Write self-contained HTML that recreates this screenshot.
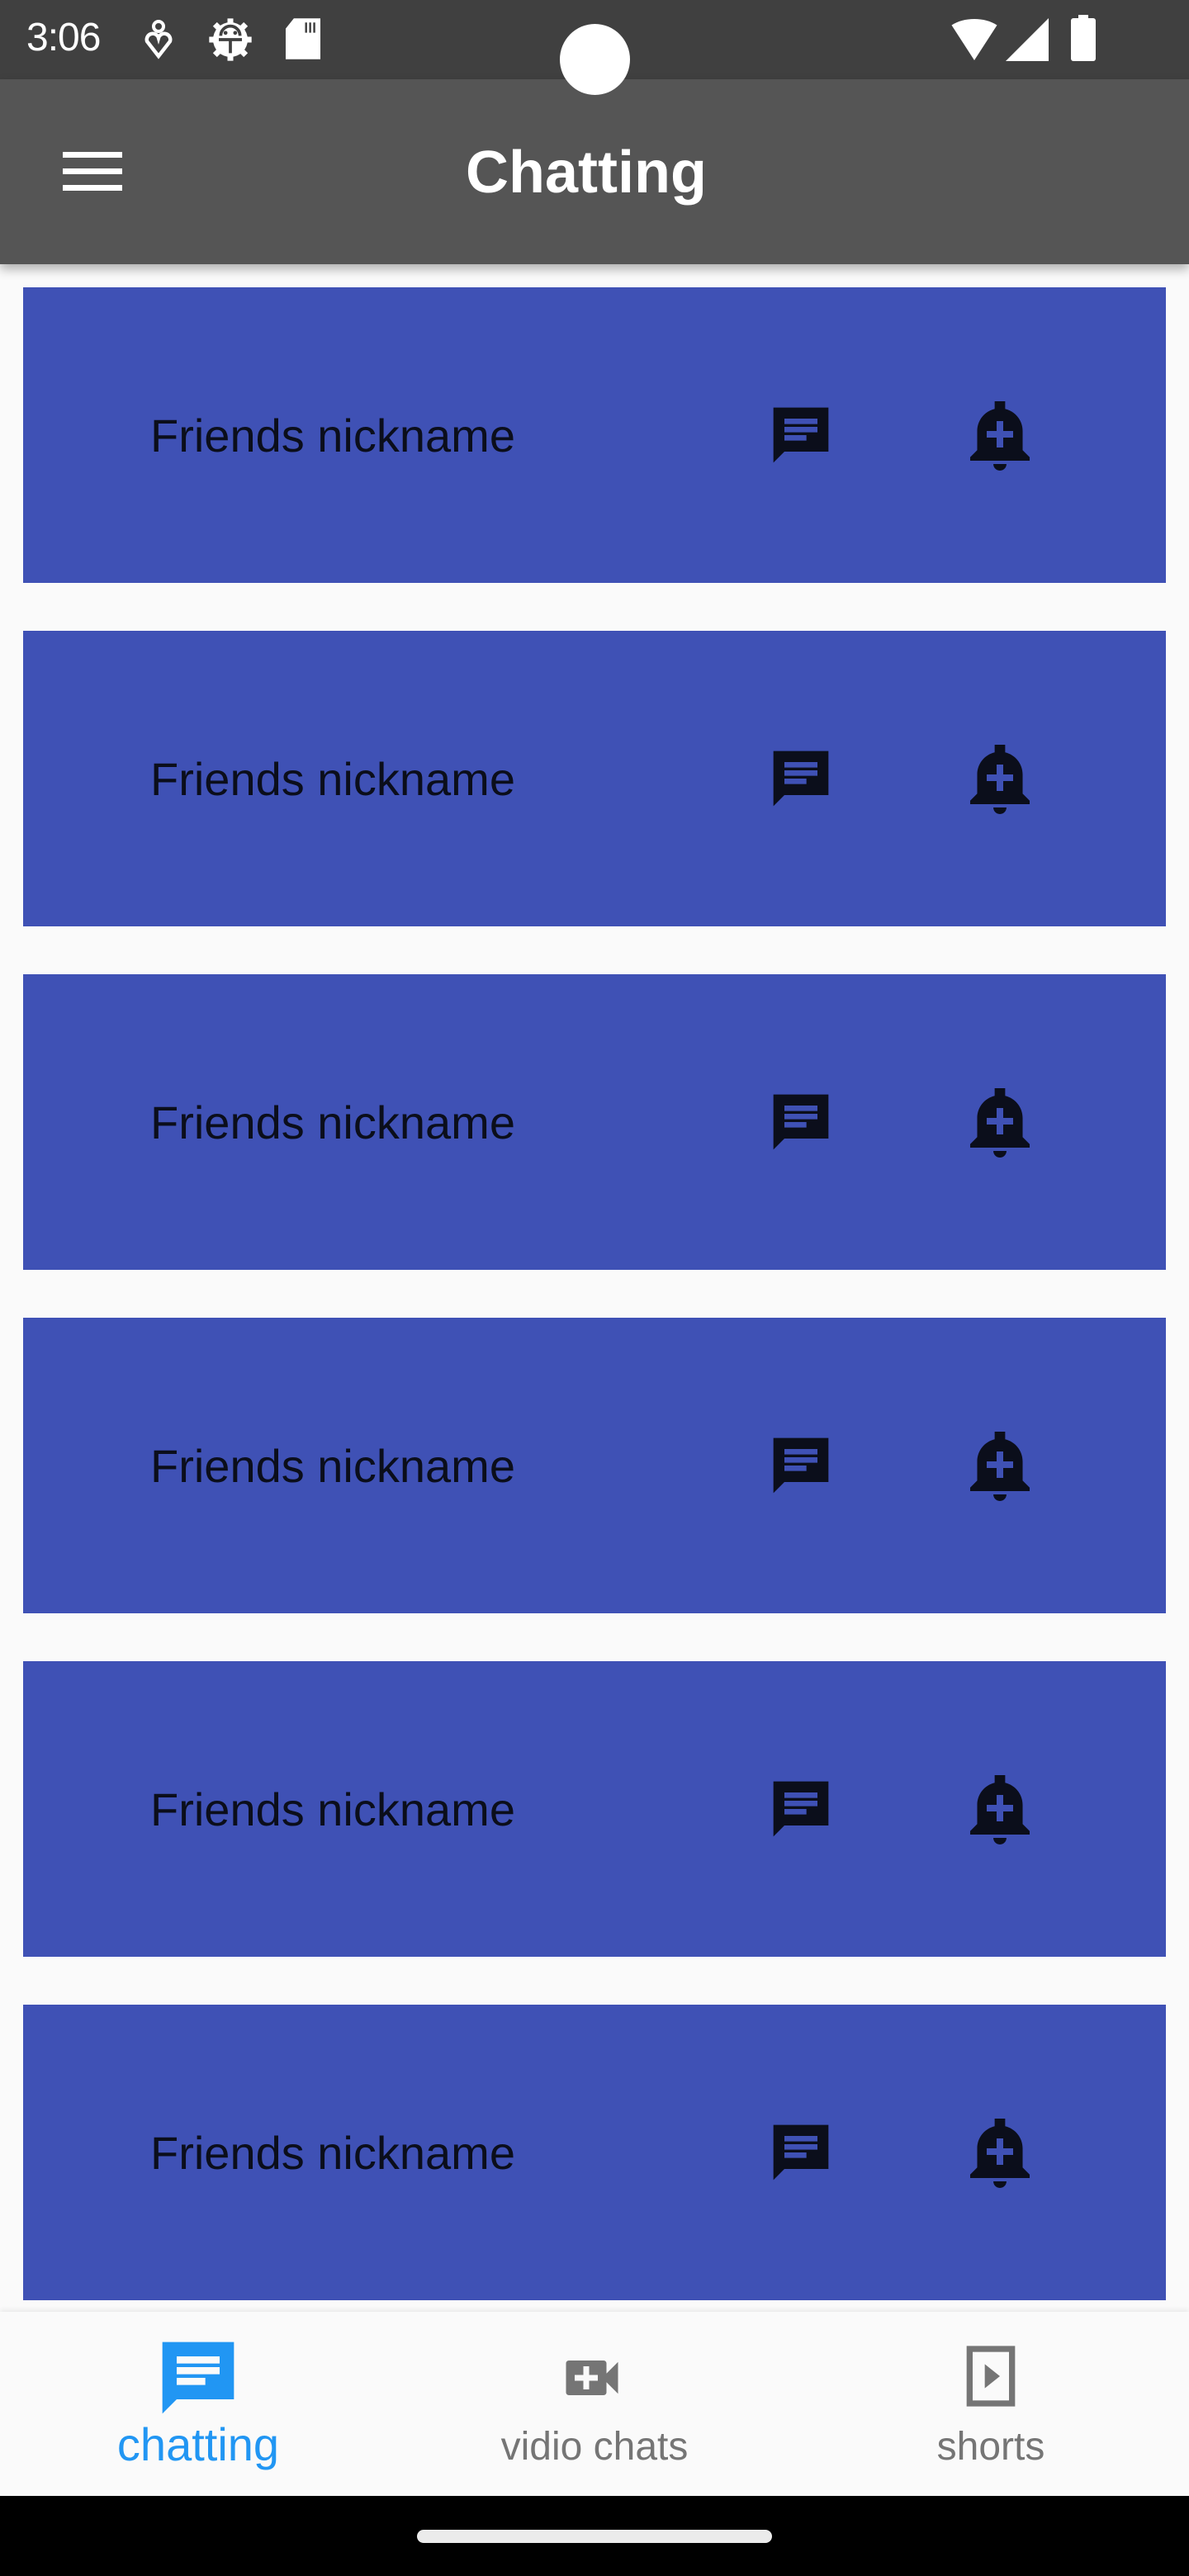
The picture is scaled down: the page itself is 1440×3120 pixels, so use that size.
<!DOCTYPE html>
<html><head><meta charset="utf-8"><style>
*{margin:0;padding:0;box-sizing:border-box}
body{width:1440px;height:3120px;background:#fafafa;position:relative;overflow:hidden;font-family:"Liberation Sans",sans-serif}
.sb{position:absolute;left:0;top:0;width:1440px;height:96px;background:#404040}
.ab{position:absolute;left:0;top:96px;width:1440px;height:224px;background:#555;box-shadow:0 6px 12px rgba(0,0,0,.3);z-index:2}
.card{position:absolute;left:28px;width:1384px;height:358px;background:#3f51b5}
.card .t{position:absolute;left:154px;top:152px;font-size:56px;color:#0b0e1b;line-height:56px}
.card svg{position:absolute;fill:#0b0e1b}
.nav{position:absolute;left:0;top:2800px;width:1440px;height:223px;background:#fafafa;box-shadow:0 -2px 6px rgba(0,0,0,.08);z-index:3}
.lbl{position:absolute;width:480px;text-align:center}
.bot{position:absolute;left:0;top:3023px;width:1440px;height:97px;background:#000;z-index:3}
</style></head><body>
<div class="sb">
<div style="position:absolute;left:32px;top:18px;font-size:48px;color:#fff;letter-spacing:-1px">3:06</div>
<svg style="position:absolute;left:172px;top:24px" width="40" height="48" viewBox="0 0 20 24"><circle cx="10" cy="4" r="3" fill="none" stroke="#fff" stroke-width="2"/><path d="M10 22 L3 13 A3.5 3.5 0 0 1 10 11 A3.5 3.5 0 0 1 17 13 Z" fill="none" stroke="#fff" stroke-width="2.2"/></svg>
<svg style="position:absolute;left:250px;top:20px" width="58" height="56" viewBox="0 0 24 24"><circle cx="12" cy="12" r="9" fill="#fff"/><g stroke="#fff" stroke-width="3"><path d="M12 1v22M1 12h22M4 4l16 16M20 4L4 20"/></g><path d="M6 12h12M12 12v7M7 10a5 5 0 0 1 10 0" stroke="#404040" stroke-width="1.6" fill="none"/><circle cx="9.5" cy="8.5" r="1" fill="#404040"/><circle cx="14.5" cy="8.5" r="1" fill="#404040"/></svg>
<svg style="position:absolute;left:346px;top:22px" width="42" height="50" viewBox="0 0 17 20"><path d="M4 0h13v20H0V5z" fill="#fff"/><path d="M10 2v5M12 2v5M14 2v5" stroke="#404040" stroke-width="1"/></svg>
<svg style="position:absolute;left:1150px;top:22px" width="60" height="52" viewBox="0 0 24 20"><path d="M12 20L1 3C7-1 17-1 23 3z" fill="#fff"/></svg>
<svg style="position:absolute;left:1218px;top:22px" width="52" height="52" viewBox="0 0 20 20"><path d="M20 0v20H0z" fill="#fff"/></svg>
<div style="position:absolute;left:1297px;top:22px;width:30px;height:52px;background:#fff;border-radius:3px"></div>
<div style="position:absolute;left:1306px;top:18px;width:12px;height:6px;background:#fff"></div>
</div>
<div style="position:absolute;left:678px;top:29px;width:85px;height:86px;border-radius:50%;background:#fff;z-index:5"></div>
<div class="ab">
<div style="position:absolute;left:76px;top:88px;width:72px;height:7px;background:#fff"></div>
<div style="position:absolute;left:76px;top:108px;width:72px;height:7px;background:#fff"></div>
<div style="position:absolute;left:76px;top:128px;width:72px;height:7px;background:#fff"></div>
<div style="position:absolute;left:0;width:1420px;text-align:center;top:72px;font-size:72px;color:#fff;font-weight:bold">Chatting</div>
</div>

<div class="card" style="top:348px"><div class="t">Friends nickname</div>
<svg style="left:902px;top:139px" width="80" height="80" viewBox="0 0 24 24"><path d="M2 2h20v16H6l-4 4zM6 14h8v-2H6zM6 11h12V9H6zM6 8h12V6H6z" fill-rule="evenodd"/></svg>
<svg style="left:1135px;top:130px" width="96" height="96" viewBox="0 0 24 24"><path d="M10.01 21.01c0 1.1.89 1.99 1.99 1.99s1.99-.89 1.99-1.99h-3.98zm8.87-4.19V11c0-3.25-2.25-5.97-5.29-6.69V2h-3.18v2.31C7.37 5.03 5.12 7.75 5.12 11v5.82L3 18.94V20h18v-1.06l-2.12-2.12zM16 13.01h-3v3h-2v-3H8V11h3V8h2v3h3v2.01z"/></svg></div>
<div class="card" style="top:764px"><div class="t">Friends nickname</div>
<svg style="left:902px;top:139px" width="80" height="80" viewBox="0 0 24 24"><path d="M2 2h20v16H6l-4 4zM6 14h8v-2H6zM6 11h12V9H6zM6 8h12V6H6z" fill-rule="evenodd"/></svg>
<svg style="left:1135px;top:130px" width="96" height="96" viewBox="0 0 24 24"><path d="M10.01 21.01c0 1.1.89 1.99 1.99 1.99s1.99-.89 1.99-1.99h-3.98zm8.87-4.19V11c0-3.25-2.25-5.97-5.29-6.69V2h-3.18v2.31C7.37 5.03 5.12 7.75 5.12 11v5.82L3 18.94V20h18v-1.06l-2.12-2.12zM16 13.01h-3v3h-2v-3H8V11h3V8h2v3h3v2.01z"/></svg></div>
<div class="card" style="top:1180px"><div class="t">Friends nickname</div>
<svg style="left:902px;top:139px" width="80" height="80" viewBox="0 0 24 24"><path d="M2 2h20v16H6l-4 4zM6 14h8v-2H6zM6 11h12V9H6zM6 8h12V6H6z" fill-rule="evenodd"/></svg>
<svg style="left:1135px;top:130px" width="96" height="96" viewBox="0 0 24 24"><path d="M10.01 21.01c0 1.1.89 1.99 1.99 1.99s1.99-.89 1.99-1.99h-3.98zm8.87-4.19V11c0-3.25-2.25-5.97-5.29-6.69V2h-3.18v2.31C7.37 5.03 5.12 7.75 5.12 11v5.82L3 18.94V20h18v-1.06l-2.12-2.12zM16 13.01h-3v3h-2v-3H8V11h3V8h2v3h3v2.01z"/></svg></div>
<div class="card" style="top:1596px"><div class="t">Friends nickname</div>
<svg style="left:902px;top:139px" width="80" height="80" viewBox="0 0 24 24"><path d="M2 2h20v16H6l-4 4zM6 14h8v-2H6zM6 11h12V9H6zM6 8h12V6H6z" fill-rule="evenodd"/></svg>
<svg style="left:1135px;top:130px" width="96" height="96" viewBox="0 0 24 24"><path d="M10.01 21.01c0 1.1.89 1.99 1.99 1.99s1.99-.89 1.99-1.99h-3.98zm8.87-4.19V11c0-3.25-2.25-5.97-5.29-6.69V2h-3.18v2.31C7.37 5.03 5.12 7.75 5.12 11v5.82L3 18.94V20h18v-1.06l-2.12-2.12zM16 13.01h-3v3h-2v-3H8V11h3V8h2v3h3v2.01z"/></svg></div>
<div class="card" style="top:2012px"><div class="t">Friends nickname</div>
<svg style="left:902px;top:139px" width="80" height="80" viewBox="0 0 24 24"><path d="M2 2h20v16H6l-4 4zM6 14h8v-2H6zM6 11h12V9H6zM6 8h12V6H6z" fill-rule="evenodd"/></svg>
<svg style="left:1135px;top:130px" width="96" height="96" viewBox="0 0 24 24"><path d="M10.01 21.01c0 1.1.89 1.99 1.99 1.99s1.99-.89 1.99-1.99h-3.98zm8.87-4.19V11c0-3.25-2.25-5.97-5.29-6.69V2h-3.18v2.31C7.37 5.03 5.12 7.75 5.12 11v5.82L3 18.94V20h18v-1.06l-2.12-2.12zM16 13.01h-3v3h-2v-3H8V11h3V8h2v3h3v2.01z"/></svg></div>
<div class="card" style="top:2428px"><div class="t">Friends nickname</div>
<svg style="left:902px;top:139px" width="80" height="80" viewBox="0 0 24 24"><path d="M2 2h20v16H6l-4 4zM6 14h8v-2H6zM6 11h12V9H6zM6 8h12V6H6z" fill-rule="evenodd"/></svg>
<svg style="left:1135px;top:130px" width="96" height="96" viewBox="0 0 24 24"><path d="M10.01 21.01c0 1.1.89 1.99 1.99 1.99s1.99-.89 1.99-1.99h-3.98zm8.87-4.19V11c0-3.25-2.25-5.97-5.29-6.69V2h-3.18v2.31C7.37 5.03 5.12 7.75 5.12 11v5.82L3 18.94V20h18v-1.06l-2.12-2.12zM16 13.01h-3v3h-2v-3H8V11h3V8h2v3h3v2.01z"/></svg></div>

<div class="nav">
<svg style="position:absolute;left:188px;top:28px" width="104" height="104" viewBox="0 0 24 24" fill="#2196f3"><path d="M2 2h20v16H6l-4 4zM6 14h8v-2H6zM6 11h12V9H6zM6 8h12V6H6z" fill-rule="evenodd"/></svg>
<div class="lbl" style="left:0;top:128px;font-size:56px;color:#2196f3">chatting</div>
<svg style="position:absolute;left:675px;top:38px" width="84" height="84" viewBox="0 0 24 24" fill="#757575"><path d="M17 10.5V7c0-.55-.45-1-1-1H4c-.55 0-1 .45-1 1v10c0 .55.45 1 1 1h12c.55 0 1-.45 1-1v-3.5l4 4v-11l-4 4zM14 13h-3v3H9v-3H6v-2h3V8h2v3h3v2z"/></svg>
<div class="lbl" style="left:480px;top:136px;font-size:48px;color:#757575">vidio chats</div>
<svg style="position:absolute;left:1156px;top:34px" width="88" height="88" viewBox="0 0 24 24" fill="#757575"><path d="M4 2h16v20H4zM6 4v16h12V4zM10 8l5 4-5 4z" fill-rule="evenodd"/></svg>
<div class="lbl" style="left:960px;top:136px;font-size:48px;color:#757575">shorts</div>
</div>
<div class="bot"><div style="position:absolute;left:505px;top:41px;width:430px;height:16px;border-radius:8px;background:#ebebeb"></div></div>
</body></html>
